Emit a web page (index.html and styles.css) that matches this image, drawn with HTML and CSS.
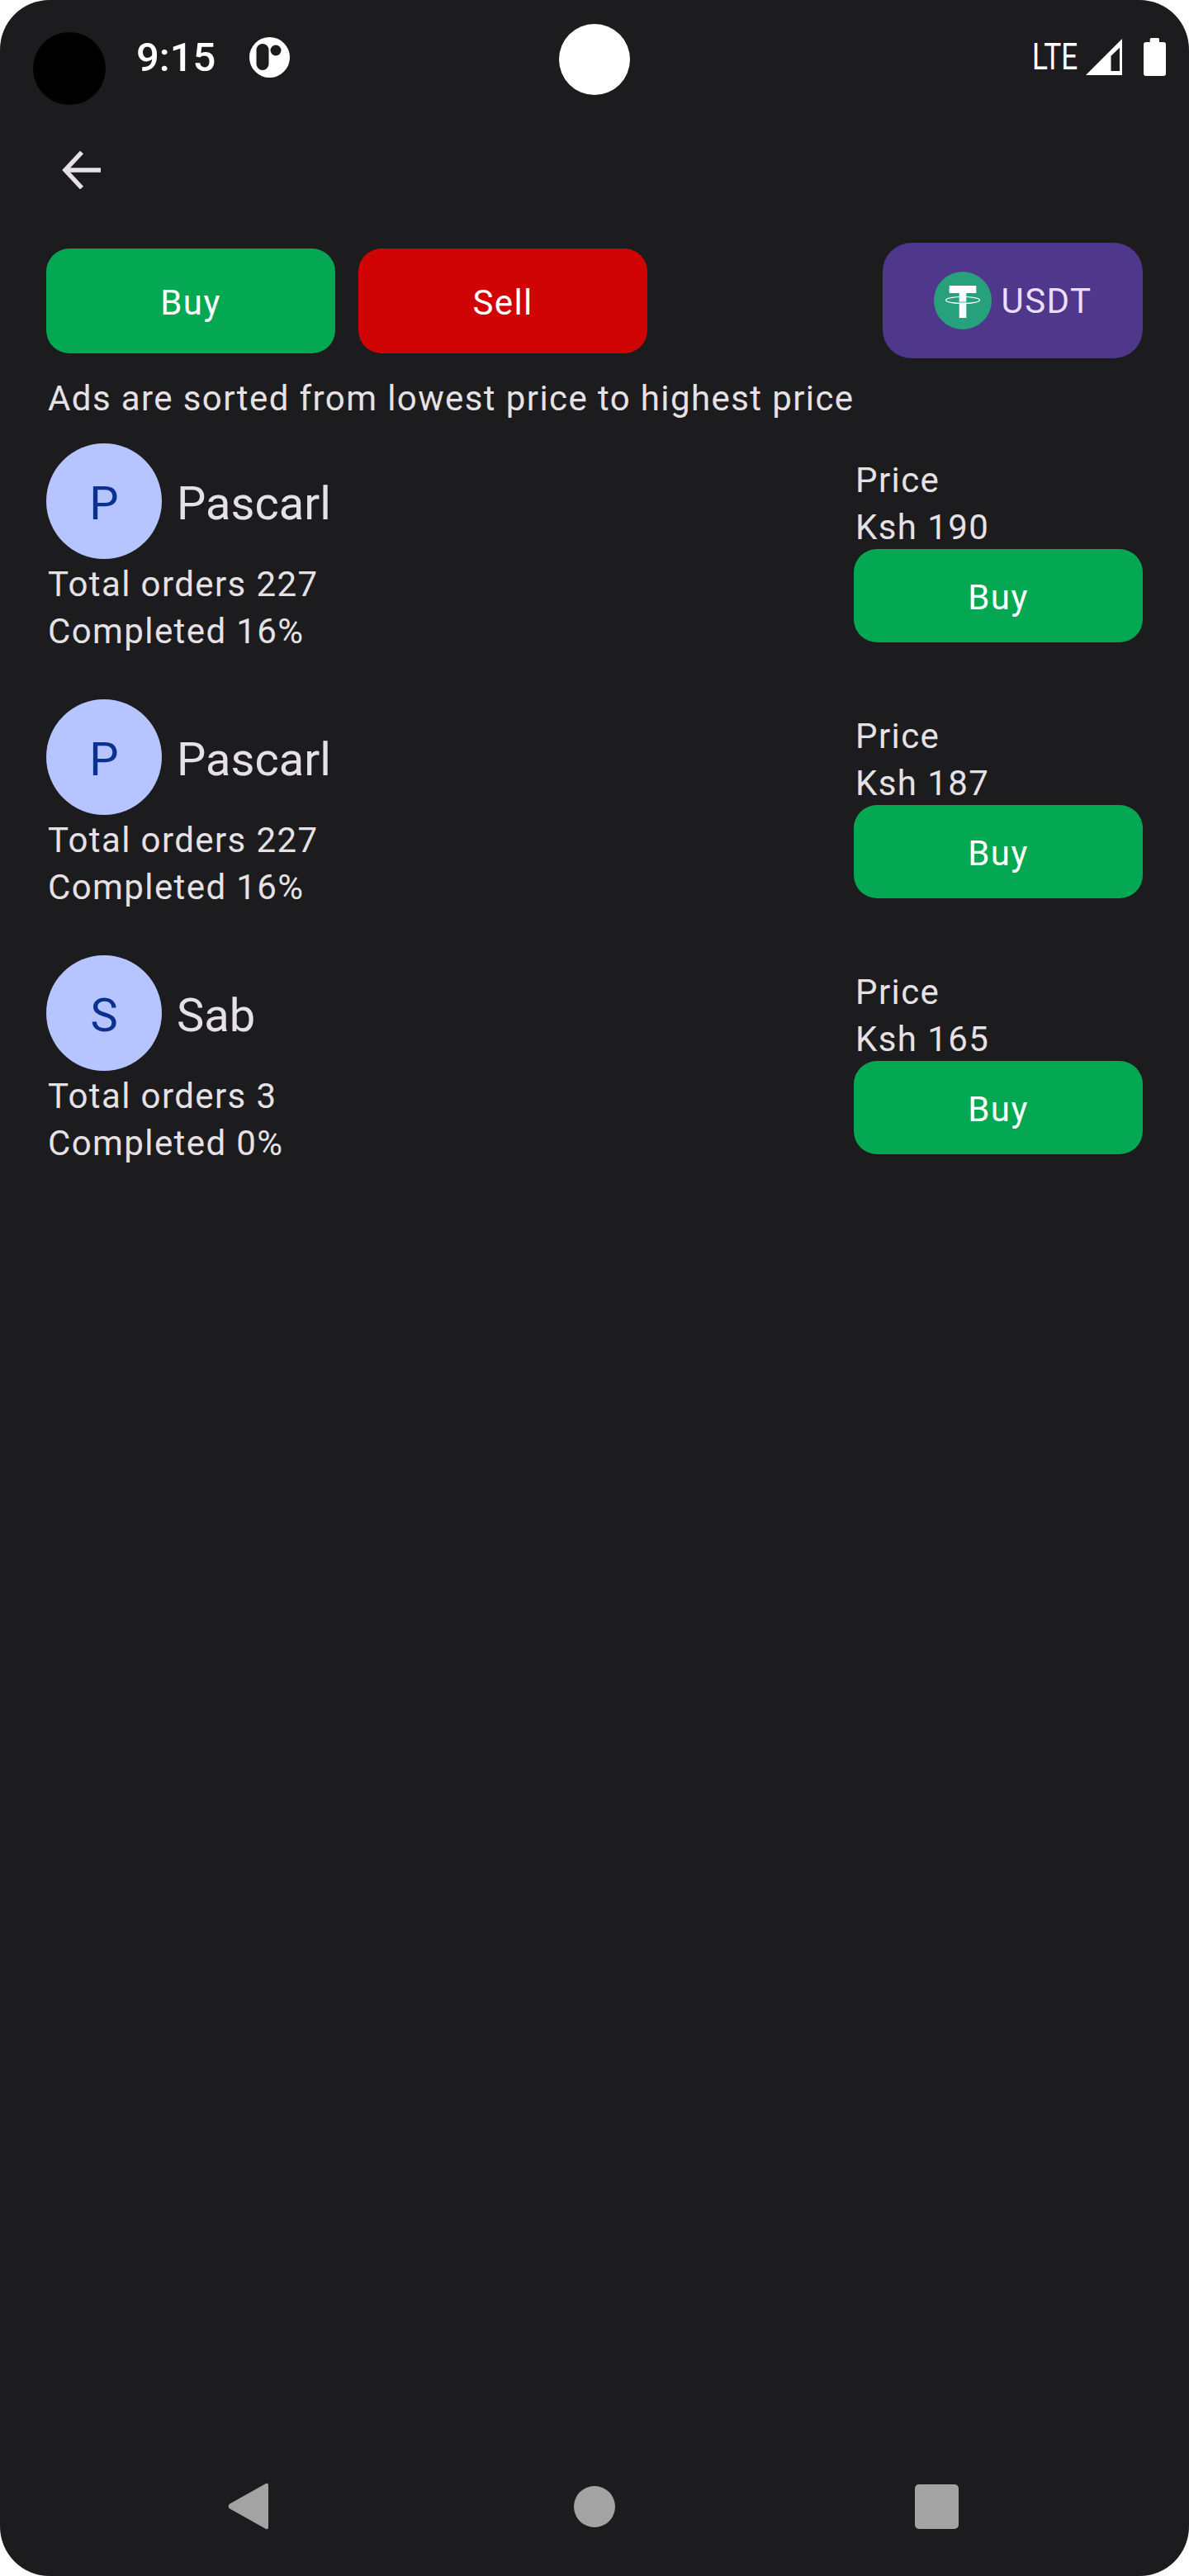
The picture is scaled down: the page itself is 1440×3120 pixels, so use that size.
FILE: index.html
```html
<!DOCTYPE html>
<html lang="en">
<head>
<meta charset="UTF-8" />
<meta name="viewport" content="width=device-width, initial-scale=1" />
<title>P2P Ads</title>
<link rel="stylesheet" href="styles.css">
</head>
<body>

<div class="phone">
  <span class="camera camera-left"></span>
  <span class="camera camera-center"></span>

  <div class="status-bar">
    <span class="time">9:15</span>
    <svg class="app-dot" width="49" height="49" viewBox="0 0 49 49">
      <circle cx="24.5" cy="24.5" r="24.5" fill="#fff"/>
      <rect x="8.500" y="8" width="15" height="32" rx="7.5" fill="#1c1c1e"/>
      <circle cx="32" cy="16" r="6.5" fill="#1c1c1e"/>
    </svg>
    <div class="status-right">
      <span class="lte">LTE</span>
      <svg class="signal" width="44" height="44" viewBox="0 0 44 44">
        <path d="M0 44 44 0V44Z" fill="#fff"/>
        <path d="M30.5 20.7 41 10.7V39H30.5Z" fill="#1c1c1e"/>
      </svg>
      <svg class="battery" width="27" height="46" viewBox="0 0 27 46">
        <path d="M7.7 5V1.5Q7.7 0 9.2 0H17.5Q19 0 19 1.5V5H24Q27 5 27 8V43Q27 46 24 46H3Q0 46 0 43V8Q0 5 3 5Z" fill="#fff"/>
      </svg>
    </div>
  </div>

  <div class="toolbar">
    <svg width="47" height="46" viewBox="0 0 47 46" fill="none" stroke="#e6e1e5" stroke-width="5.5">
      <path d="M47 23H4"/>
      <path d="M24 1.5 4 23 24 44.5"/>
    </svg>
  </div>

  <div class="tabs">
    <button class="tab btn-buy">Buy</button>
    <button class="tab btn-sell">Sell</button>
    <button class="coin-btn">
      <svg width="70" height="70" viewBox="0 0 70 70">
        <circle cx="35" cy="35" r="35" fill="#26a17b"/>
        <path d="M18.7 17H51.3V26H39.3V56H30.7V26H18.7Z" fill="#fff"/>
        <ellipse cx="35" cy="34.5" rx="20.5" ry="4" fill="none" stroke="#fff" stroke-width="1.2"/>
        <path d="M30.700 36.800Q35 37.400 39.300 36.800" fill="none" stroke="#26a17b" stroke-width="0.8"/>
      </svg>
      <span>USDT</span>
    </button>
  </div>

  <p class="hint">Ads are sorted from lowest price to highest price</p>

  <div class="ads">
    <div class="ad">
      <div class="ad-left">
        <div class="user">
          <span class="avatar">P</span>
          <span class="name">Pascarl</span>
        </div>
        <div class="stats">
          <div>Total orders 227</div>
          <div>Completed 16%</div>
        </div>
      </div>
      <div class="ad-right">
        <div class="price">Price</div>
        <div class="price">Ksh 190</div>
        <button class="ad-btn btn-buy">Buy</button>
      </div>
    </div>

    <div class="ad">
      <div class="ad-left">
        <div class="user">
          <span class="avatar">P</span>
          <span class="name">Pascarl</span>
        </div>
        <div class="stats">
          <div>Total orders 227</div>
          <div>Completed 16%</div>
        </div>
      </div>
      <div class="ad-right">
        <div class="price">Price</div>
        <div class="price">Ksh 187</div>
        <button class="ad-btn btn-buy">Buy</button>
      </div>
    </div>

    <div class="ad">
      <div class="ad-left">
        <div class="user">
          <span class="avatar">S</span>
          <span class="name">Sab</span>
        </div>
        <div class="stats">
          <div>Total orders 3</div>
          <div>Completed 0%</div>
        </div>
      </div>
      <div class="ad-right">
        <div class="price">Price</div>
        <div class="price">Ksh 165</div>
        <button class="ad-btn btn-buy">Buy</button>
      </div>
    </div>
  </div>

  <div class="nav-bar">
    <svg class="nav-back" width="49" height="57" viewBox="0 0 49 57">
      <path d="M46 1 1.5 26Q0 28.500 1.500 31L46 56Q49 57 49 54V3Q49 0 46 1Z" fill="#a3a3a3"/>
    </svg>
    <span class="nav-home"></span>
    <span class="nav-recent"></span>
  </div>
</div>

</body>
</html>
```

FILE: styles.css
```css
:root {
  --bg: #1c1c1e;
  --text: #e6e1e5;
  --green: #05a852;
  --red: #d00404;
  --purple: #4f378b;
}
body {
  margin: 0;
  background: #fff;
  font-family: Roboto, 'Noto Sans', sans-serif;
}
button {
  border: none;
  padding: 0;
  font-family: inherit;
  cursor: pointer;
}
.phone {
  position: relative;
  width: 1440px;
  height: 3120px;
  background: var(--bg);
  border-radius: 60px;
  display: flex;
  flex-direction: column;
  overflow: hidden;
}
.camera {
  position: absolute;
  border-radius: 50%;
}
.camera-left {
  left: 40px;
  top: 39px;
  width: 88px;
  height: 88px;
  background: #000;
}
.camera-center {
  left: 677px;
  top: 29px;
  width: 86px;
  height: 86px;
  background: #fff;
}

/* status bar */
.status-bar {
  height: 138px;
  flex-shrink: 0;
  display: flex;
  align-items: center;
  padding: 0 28px 0 165px;
  color: #fff;
}
.time {
  font-size: 49px;
  font-weight: 500;
  line-height: 1;
}
.app-dot {
  margin-left: 41px;
}
.status-right {
  margin-left: auto;
  display: flex;
  align-items: center;
}
.lte {
  font-size: 44px;
  line-height: 1;
  width: 57px;
  white-space: nowrap;
  transform: scaleX(0.8);
  transform-origin: left center;
}
.signal {
  margin-left: 8px;
}
.battery {
  margin-left: 26px;
}

.toolbar {
  height: 136px;
  flex-shrink: 0;
  display: flex;
  align-items: center;
  padding-left: 75px;
}

/* buy / sell tabs */
.tabs {
  margin-top: 20px;
  padding: 0 56px;
  display: flex;
  align-items: center;
  gap: 28px;
}
.tab {
  width: 350px;
  height: 127px;
  padding-top: 4px;
  border-radius: 28px;
  color: #fff;
  font-size: 42px;
  letter-spacing: 1.4px;
}
.btn-buy {
  background: var(--green);
}
.btn-sell {
  background: var(--red);
}
.coin-btn {
  margin-left: auto;
  width: 315px;
  height: 140px;
  border-radius: 35px;
  background: var(--purple);
  color: #eaddff;
  font-size: 42px;
  letter-spacing: 1.4px;
  display: flex;
  align-items: center;
  justify-content: center;
  gap: 12px;
}

.hint {
  margin: 21px 0 26px 58px;
  color: var(--text);
  font-size: 42px;
  line-height: 56px;
  letter-spacing: 1.4px;
}

/* ads */
.ads {
  padding: 0 56px;
}
.ad {
  height: 310px;
  display: flex;
  justify-content: space-between;
}
.user {
  display: flex;
  align-items: center;
}
.avatar {
  box-sizing: border-box;
  width: 140px;
  height: 140px;
  padding-top: 5px;
  border-radius: 50%;
  background: #b6c4ff;
  color: #0a3191;
  font-size: 56px;
  display: flex;
  align-items: center;
  justify-content: center;
}
.name {
  margin: 5px 0 0 18px;
  color: var(--text);
  font-size: 56px;
}
.stats {
  margin: 2px 0 0 2px;
  color: var(--text);
  font-size: 42px;
  line-height: 57px;
  letter-spacing: 1.4px;
}
.ad-right {
  width: 350px;
  padding-top: 17px;
}
.price {
  margin-left: 2px;
  color: var(--text);
  font-size: 42px;
  line-height: 56.5px;
  letter-spacing: 1.4px;
}
.ad-btn {
  display: block;
  width: 350px;
  height: 113px;
  margin-top: -2px;
  padding-top: 4px;
  border-radius: 28px;
  color: #fff;
  font-size: 42px;
  letter-spacing: 1.4px;
}

/* bottom nav */
.nav-bar {
  margin-top: auto;
  height: 169px;
  flex-shrink: 0;
  display: flex;
  align-items: center;
  padding-left: 276px;
}
.nav-home {
  margin-left: 370px;
  width: 50px;
  height: 50px;
  border-radius: 50%;
  background: #a3a3a3;
}
.nav-recent {
  margin-left: 363px;
  width: 53px;
  height: 54px;
  border-radius: 5px;
  background: #a3a3a3;
}
```
